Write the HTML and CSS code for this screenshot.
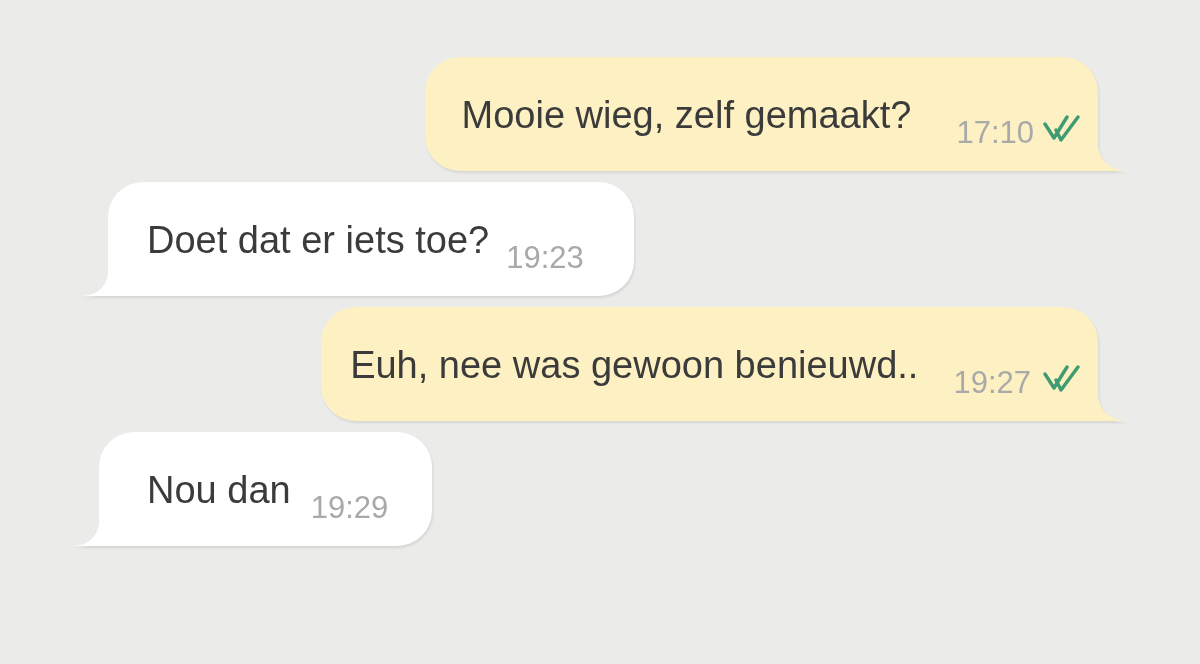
FILE: index.html
```html
<!DOCTYPE html>
<html lang="nl">
<head>
<meta charset="utf-8">
<title>Chat</title>
<link rel="stylesheet" href="styles.css">
</head>
<body>
<div class="chat">
  <div class="bubble out m1"><span class="text">Mooie wieg, zelf gemaakt?</span><span class="meta">17:10<svg class="ticks" width="38" height="28" viewBox="0 0 38 28"><polyline points="3,9 12,23 25,2"/><polyline points="14,15 19,25 36,2"/></svg></span><svg class="tail" viewBox="0 0 31 32" preserveAspectRatio="none"><path d="M0 0 Q1 31 31 32 L0 32 Z"/></svg></div>
  <div class="bubble in m2"><span class="text">Doet dat er iets toe?</span><span class="meta">19:23</span><svg class="tail" viewBox="0 0 27 30" preserveAspectRatio="none"><path d="M27 0 Q26 29 0 30 L27 30 Z"/></svg></div>
  <div class="bubble out m3"><span class="text">Euh, nee was gewoon benieuwd..</span><span class="meta">19:27<svg class="ticks" width="38" height="28" viewBox="0 0 38 28"><polyline points="3,9 12,23 25,2"/><polyline points="14,15 19,25 36,2"/></svg></span><svg class="tail" viewBox="0 0 31 32" preserveAspectRatio="none"><path d="M0 0 Q1 31 31 32 L0 32 Z"/></svg></div>
  <div class="bubble in m4"><span class="text">Nou dan</span><span class="meta">19:29</span><svg class="tail" viewBox="0 0 27 30" preserveAspectRatio="none"><path d="M27 0 Q26 29 0 30 L27 30 Z"/></svg></div>
</div>
</body>
</html>
```
FILE: styles.css
```css
html, body {
  margin: 0;
  height: 100%;
}
body {
  background: #ebebe9;
  overflow: hidden;
}
.chat {
  display: flex;
  flex-direction: column;
  gap: 11px;
  padding: 57px 102px 0 99px;
}
.bubble {
  position: relative;
  height: 114px;
  box-sizing: border-box;
  padding-top: 36px;
  font-family: "Liberation Sans", Arial, sans-serif;
  font-size: 38px;
  line-height: 44px;
  color: #3b3b3b;
  white-space: nowrap;
  border-radius: 35px;
  filter: drop-shadow(1px 2px 1px rgba(0, 0, 0, 0.09));
}
.out {
  align-self: flex-end;
  background: #fdf0c2;
  border-bottom-right-radius: 0;
}
.in {
  align-self: flex-start;
  background: #ffffff;
  border-bottom-left-radius: 0;
}
.meta {
  font-size: 31px;
  color: #a9a9a9;
  vertical-align: -15px;
}
.ticks {
  margin-left: 8px;
  fill: none;
  stroke: #3e9b72;
  stroke-width: 3.4;
  stroke-linejoin: round;
  stroke-linecap: round;
  vertical-align: 0;
}
.tail {
  position: absolute;
  bottom: 0;
}
.out .tail {
  right: -30px;
  width: 31px;
  height: 32px;
  fill: #fdf0c2;
}
.in .tail {
  left: -26px;
  width: 27px;
  height: 30px;
  fill: #ffffff;
}

.m1 { padding-left: 37px; padding-right: 18px; }
.m1 .meta { margin-left: 45px; }
.m2 { padding-left: 39px; padding-right: 50px; margin-left: 9px; }
.m2 .meta { margin-left: 17px; }
.m3 { padding-left: 29px; padding-right: 18px; }
.m3 .meta { margin-left: 35px; }
.m3 .ticks { margin-left: 11px; }
.m4 { padding-left: 48px; padding-right: 44px; }
.m4 .meta { margin-left: 20px; }
```
